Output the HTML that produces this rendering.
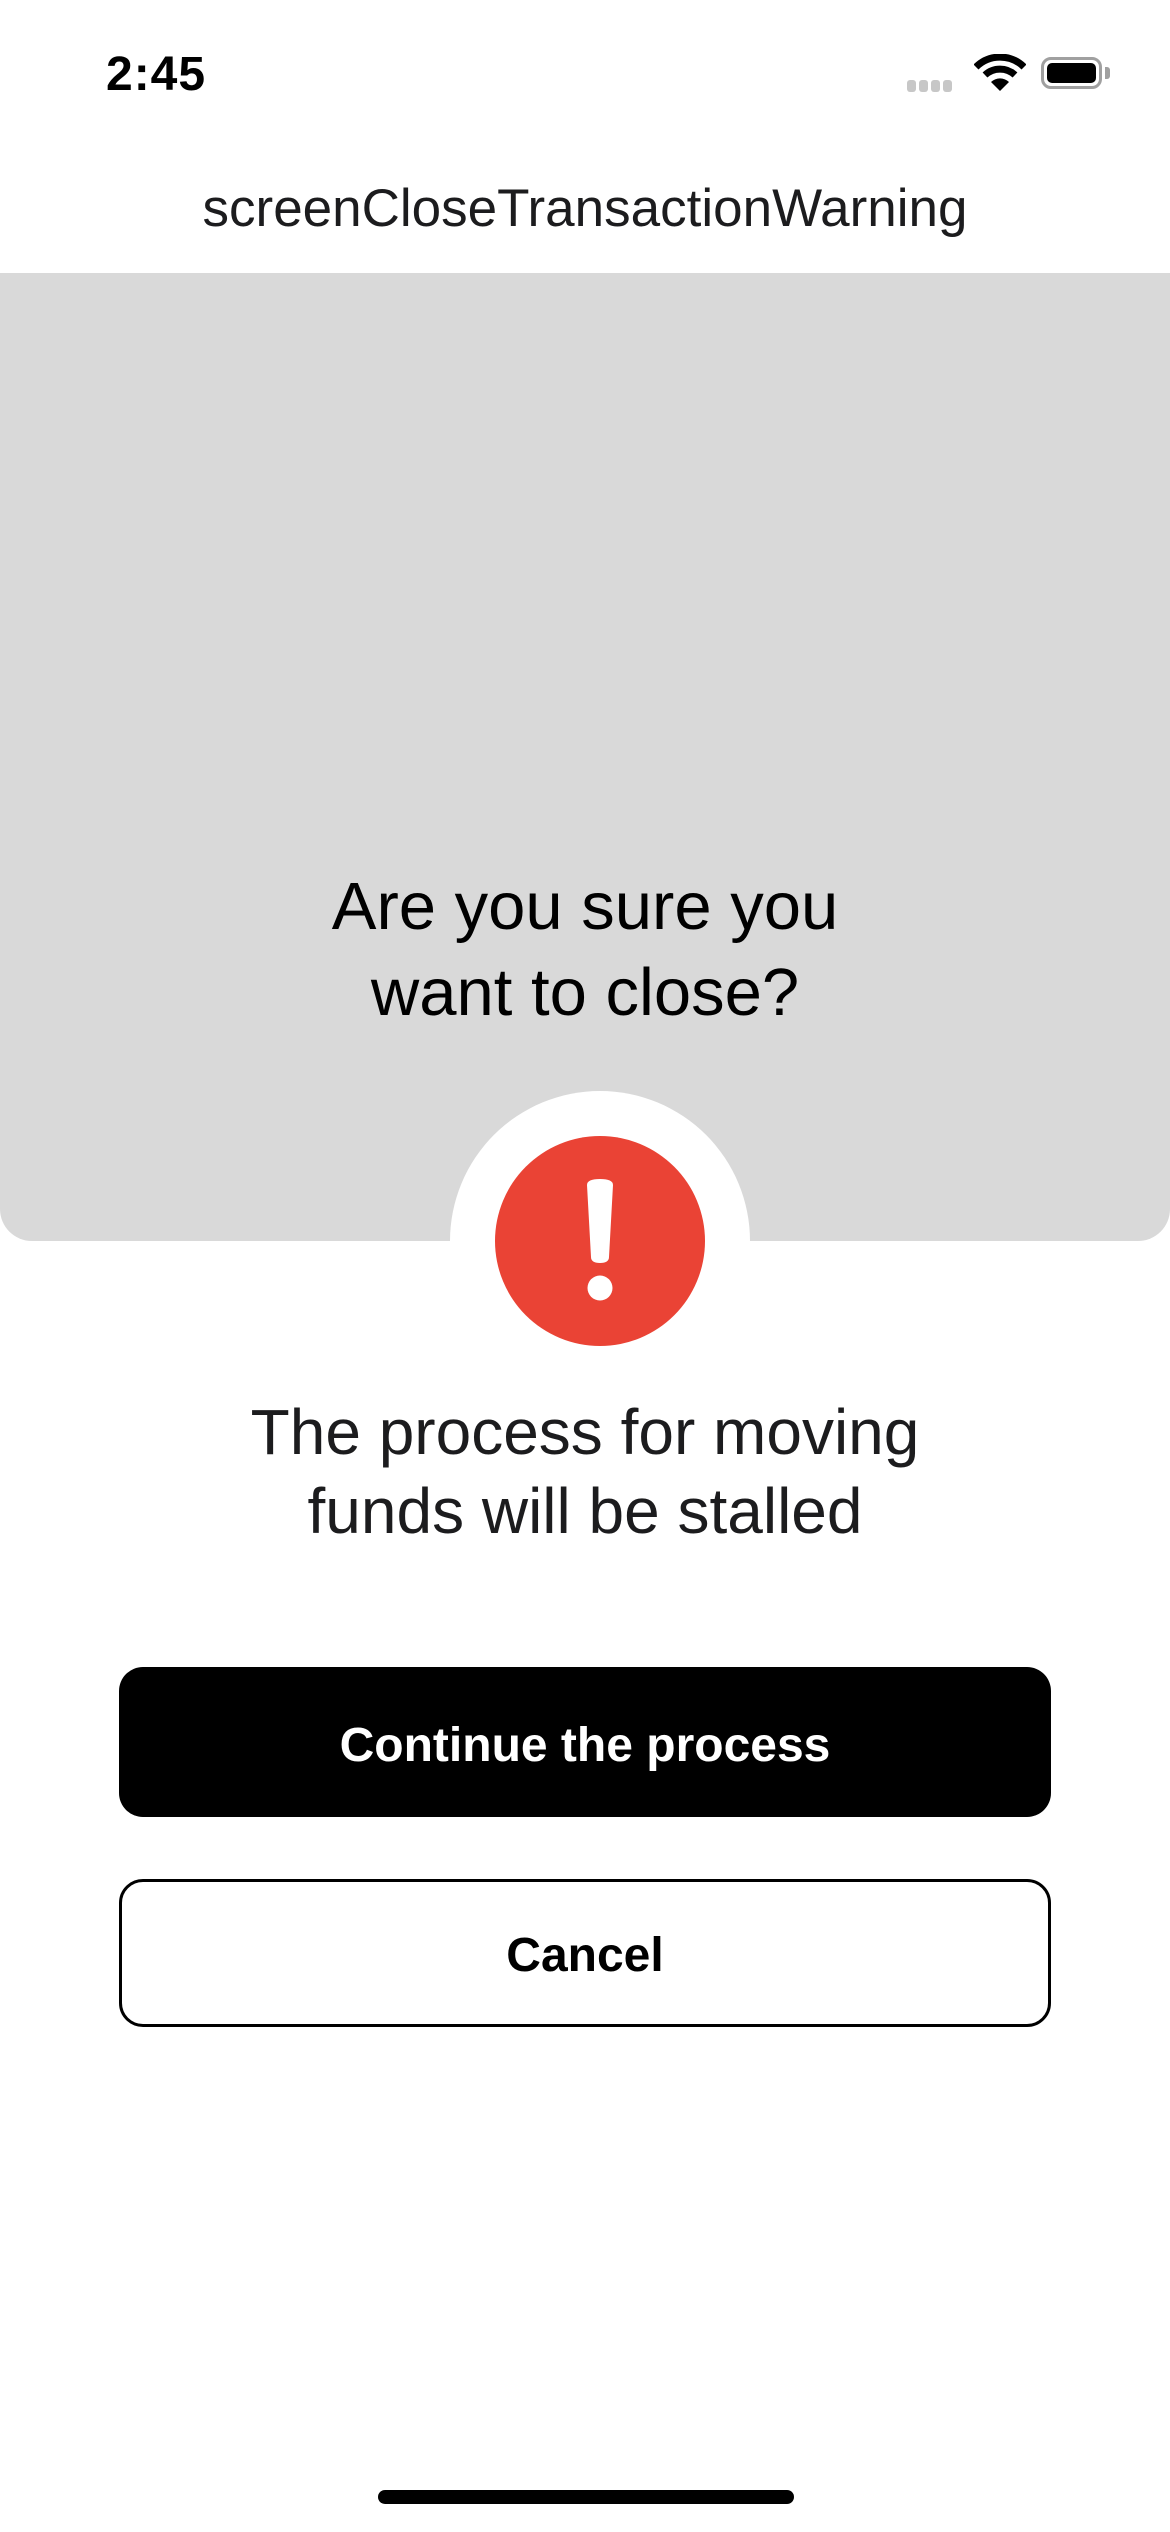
<!DOCTYPE html>
<html><head><meta charset="utf-8"><style>
body{margin:0;width:1170px;height:2532px;background:#fff;position:relative;overflow:hidden;font-family:"Liberation Sans",sans-serif;color:#000}
.a{position:absolute}
</style></head><body>
<div class="a" style="left:106px;top:47px;font-size:48px;font-weight:bold;letter-spacing:1px">2:45</div>
<div class="a" style="left:907px;top:80px;width:48px;height:12px">
<span class="a" style="left:0;width:9px;height:12px;border-radius:3px;background:#c7c7c7"></span>
<span class="a" style="left:12px;width:9px;height:12px;border-radius:3px;background:#c7c7c7"></span>
<span class="a" style="left:24px;width:9px;height:12px;border-radius:3px;background:#c7c7c7"></span>
<span class="a" style="left:36px;width:9px;height:12px;border-radius:3px;background:#c7c7c7"></span>
</div>
<svg class="a" style="left:974px;top:54px" width="52" height="38" viewBox="0 0 52 38"><path d="M2 13 A34 34 0 0 1 50 13" stroke="#000" stroke-width="7" fill="none"/><path d="M11 21 A22 22 0 0 1 41 21" stroke="#000" stroke-width="7" fill="none"/><path d="M26 37 L17 28 A13 13 0 0 1 35 28 Z" fill="#000"/></svg>
<div class="a" style="left:1041px;top:57px;width:61px;height:32px;border:3px solid #a0a0a0;border-radius:10px;box-sizing:border-box"></div>
<div class="a" style="left:1047px;top:63px;width:49px;height:20px;background:#000;border-radius:5px"></div>
<div class="a" style="left:1105px;top:67px;width:5px;height:12px;background:#a0a0a0;border-radius:0 3px 3px 0"></div>
<div class="a" style="left:0;top:178px;width:1170px;text-align:center;font-size:53px;color:#1c1c1e">screenCloseTransactionWarning</div>
<div class="a" style="left:0;top:273px;width:1170px;height:968px;background:#d9d9d9;border-radius:0 0 32px 32px"></div>
<div class="a" style="left:0;top:864px;width:1170px;text-align:center;font-size:67px;line-height:86px;color:#000">Are you sure you<br>want to close?</div>
<div class="a" style="left:450px;top:1091px;width:300px;height:300px;border-radius:50%;background:#fff"></div>
<div class="a" style="left:495px;top:1136px;width:210px;height:210px;border-radius:50%;background:#ea4335"></div>
<svg class="a" style="left:570px;top:1175px" width="60" height="130" viewBox="0 0 60 130"><path d="M17 10 Q17 4 30 4 Q43 4 43 10 L39 82 Q39 88 30 88 Q21 88 21 82 Z" fill="#fff"/><circle cx="30" cy="113" r="12.5" fill="#fff"/></svg>
<div class="a" style="left:0;top:1393px;width:1170px;text-align:center;font-size:64px;line-height:79px;color:#1c1c1e">The process for moving<br>funds will be stalled</div>
<div class="a" style="left:119px;top:1667px;width:932px;height:150px;background:#000;border-radius:24px;color:#fff;font-size:48px;font-weight:bold;text-align:center;line-height:158px">Continue the process</div>
<div class="a" style="left:119px;top:1879px;width:932px;height:148px;border:3px solid #000;box-sizing:border-box;border-radius:24px;font-size:48px;font-weight:bold;text-align:center;line-height:148px">Cancel</div>
<div class="a" style="left:378px;top:2490px;width:416px;height:14px;background:#000;border-radius:7px"></div>
</body></html>
